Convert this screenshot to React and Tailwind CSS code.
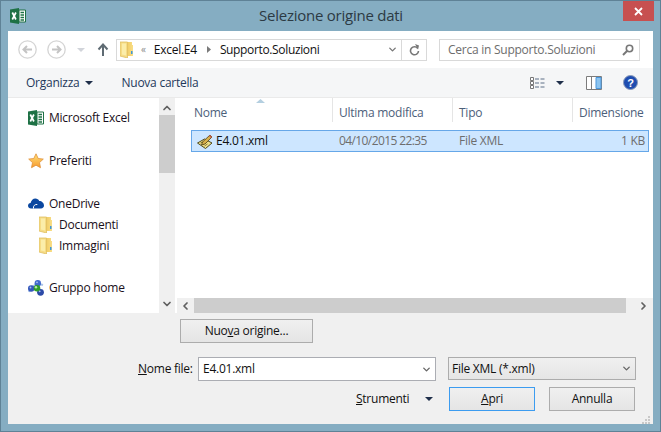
import { ChevronDown, ChevronUp, ChevronLeft, ChevronRight } from 'lucide-react'

const Caret = ({ className = '' }) => (
  <svg width="8" height="4" viewBox="0 0 8 4" className={className}>
    <path d="M0 0h8L4 4z" fill="#1f2f4a" />
  </svg>
)

const ExcelIcon = ({ className = '' }) => (
  <svg width="16" height="16" viewBox="0 0 16 16" className={className}>
    <path d="M0 1.5L9 0v16L0 14.5z" fill="#1e7145" />
    <path d="M9 2h6.5v12H9z" fill="#fff" stroke="#1e7145" />
    <path d="M10.5 4.5h3.5M10.5 7h3.5M10.5 9.5h3.5M10.5 12h3.5" stroke="#1e7145" strokeWidth="1.4" />
    <path d="M2.3 4.5l3.6 7M5.9 4.5l-3.6 7" stroke="#fff" strokeWidth="1.7" />
  </svg>
)

const FolderIcon = ({ className = '', id }) => (
  <svg width="13" height="17" viewBox="0 0 13 17" className={className}>
    <defs>
      <linearGradient id={id} x1="0" y1="0" x2="1" y2="0">
        <stop offset="0" stopColor="#f0c85c" />
        <stop offset="1" stopColor="#f8de88" />
      </linearGradient>
    </defs>
    <path d="M6 1h6v3h1v11H6z" fill={`url(#${id})`} />
    <path d="M0 1h7.500v16L0 15z" fill="#f6dc86" />
    <path d="M0 1h7.500v16L0 15z" fill="none" stroke="#e0bf62" strokeWidth=".8" />
    <path d="M2 2.500h4v12l-4-1z" fill="#fbeda9" />
    <path d="M11 10h1.500v3H11z" fill="#3f97d8" />
  </svg>
)

const StarIcon = () => (
  <svg width="16" height="16" viewBox="0 0 16 16">
    <defs>
      <linearGradient id="star" x1="0" y1="0" x2="0" y2="1">
        <stop offset="0" stopColor="#ffe27a" />
        <stop offset="1" stopColor="#f79a2e" />
      </linearGradient>
    </defs>
    <path d="M8 .8l2.2 4.700 5.100.6-3.800 3.500 1 5.100L8 12.200l-4.500 2.500 1-5.100L.7 6.100l5.100-.6z" fill="url(#star)" stroke="#e0903a" strokeWidth=".8" />
  </svg>
)

const CloudIcon = () => (
  <svg width="16" height="11" viewBox="0 0 16 11">
    <path d="M3 10.500C1.300 10.500 0 9.400 0 7.800c0-1.500 1.100-2.600 2.600-2.700C3.200 2.400 5 .6 7.400.6c1.700 0 3.100.9 3.800 2.300C13.900 2.900 16 5 16 7.600c0 1.700-1.200 2.900-3 2.900z" fill="#0a47a0" />
    <path d="M5.500 10.500c-.6-2.500 1.500-4.500 3.800-4" stroke="#fff" strokeWidth="1" fill="none" />
  </svg>
)

const HomeGroupIcon = () => (
  <svg width="16" height="16" viewBox="0 0 16 16">
    <path d="M1 12C3 6 9 3 15 5" fill="none" stroke="#a9c4e8" strokeWidth="2" />
    <circle cx="3.200" cy="8.500" r="3.200" fill="#3558bb" />
    <circle cx="9.800" cy="3.200" r="3.200" fill="#4169cc" />
    <circle cx="12.500" cy="12.300" r="3.400" fill="#2c4aa8" />
    <circle cx="9" cy="8.200" r="3.300" fill="#2f9e2a" />
    <circle cx="8" cy="7.200" r="1.200" fill="#b8eaa8" />
    <circle cx="2.500" cy="7.500" r=".9" fill="#a8c0f0" />
    <circle cx="9" cy="2.300" r=".9" fill="#a8c0f0" />
    <circle cx="11.700" cy="11.300" r=".9" fill="#a8c0f0" />
  </svg>
)

const XmlIcon = () => (
  <svg width="16" height="15" viewBox="0 0 16 15">
    <path d="M0.500 9l7-4 7.500 4-6.500 5.500z" fill="#efe08a" stroke="#4e4a1e" />
    <path d="M3.500 9l4-2M5.500 10.500l4-2M7.500 12l3-2" stroke="#8a7f30" />
    <path d="M5.500 8l7.500-7 2 2-7 7-3.500 1z" fill="#d8b04a" stroke="#4e3f18" strokeWidth=".8" />
    <path d="M12.500 1.500l2 2" stroke="#c85a4a" strokeWidth="1.500" />
  </svg>
)

const ArrowCircle = ({ flip }) => (
  <svg width="19" height="19" viewBox="0 0 19 19" className={flip ? 'rotate-180' : ''}>
    <circle cx="9.500" cy="9.500" r="8.700" fill="#fff" stroke="#d4d4d4" strokeWidth="1.300" />
    <path d="M14 9.500H6M9 6L5.500 9.500 9 13" fill="none" stroke="#c4c4c4" strokeWidth="2" />
  </svg>
)

const SideItem = ({ icon, label, sub }) => (
  <div className={sub ? 'flex h-[21px] items-center pl-[31px]' : 'flex h-[21px] items-center pl-[20px]'}>
    <span className={sub ? 'flex w-[20px] justify-start' : 'flex w-[21px] justify-start'}>{icon}</span>
    <span className="text-[12px] text-[#1a1020]">{label}</span>
  </div>
)

const Column = ({ label, className }) => (
  <div className={`flex h-[24px] items-center border-r border-[#e5e5e5] pt-[5px] text-[12px] text-[#4c607a] ${className}`}>
    {label}
  </div>
)

const Btn = ({ children, className = '' }) => (
  <button className={`flex h-[24px] items-center justify-center border bg-gradient-to-b from-[#f0f0f0] to-[#e5e5e5] text-[12px] text-[#111] ${className}`}>
    {children}
  </button>
)

export default function App() {
  return (
    <div className="flex h-[432px] w-[661px] flex-col border border-[#5f8296] bg-[#85adc2] font-['Open_Sans','Liberation_Sans',sans-serif] tracking-[-0.25px]">
      <div className="relative flex h-[30px] shrink-0 items-center pl-[9px]">
        <ExcelIcon className="-mt-[1px]" />
        <div className="-mt-[2px] flex-1 pr-[24px] text-center text-[15px] text-[#2c3a44]">Selezione origine dati</div>
        <div className="absolute right-[6px] top-0 flex h-[20px] w-[31px] items-center justify-center bg-[#c75050]">
          <svg width="9" height="9" viewBox="0 0 9 9">
            <path d="M1 1l7 7M8 1l-7 7" stroke="#fff" strokeWidth="1.800" />
          </svg>
        </div>
      </div>

      <div className="mx-[7px] flex h-[393px] w-[645px] flex-col bg-white">
        <div className="flex h-[37px] shrink-0 items-center">
          <div className="ml-[10px] flex w-[98px] items-center">
            <ArrowCircle />
            <span className="ml-[10px]"><ArrowCircle flip /></span>
            <Caret className="ml-[11px] opacity-20" />
            <svg width="12" height="13" viewBox="0 0 12 13" className="ml-[12px]">
              <path d="M6 13V2M1.500 6.500L6 1.500l4.500 5" fill="none" stroke="#5f6b73" strokeWidth="2" />
            </svg>
          </div>
          <div className="flex h-[22px] w-[311px] items-center border border-[#d9d9d9] text-[12px] text-[#111]">
            <FolderIcon id="folder-nav" className="ml-[3px]" />
            <span className="ml-[8px] text-[10px] text-[#8a8a8a]">«</span>
            <span className="ml-[8px]">Excel.E4</span>
            <svg width="4" height="7" viewBox="0 0 4 7" className="ml-[10px]"><path d="M0 0l4 3.500L0 7z" fill="#7a7a7a" /></svg>
            <span className="ml-[9px] w-[164px] tracking-[-0.35px]">Supporto.Soluzioni</span>
            <ChevronDown size={11} strokeWidth={3} color="#777" className="ml-auto mr-[3px]" />
            <div className="flex h-full w-[25px] items-center justify-center border-l border-[#d9d9d9]">
              <svg width="11" height="12" viewBox="0 0 11 12">
                <path d="M8.800 4.500A4 4 0 1 0 9.500 7" fill="none" stroke="#777" strokeWidth="1.600" />
                <path d="M6 0l4 1.500-1 4z" fill="#777" />
              </svg>
            </div>
          </div>
          <div className="ml-[12px] flex h-[22px] w-[201px] items-center border border-[#d9d9d9] pl-[8px] pr-[5px] text-[12px] text-[#6d6d6d]">
            Cerca in Supporto.Soluzioni
            <svg width="12" height="12" viewBox="0 0 12 12" className="ml-auto">
              <circle cx="7.500" cy="4.500" r="3.200" fill="none" stroke="#777" strokeWidth="1.600" />
              <path d="M5 7l-4 4" stroke="#777" strokeWidth="2" />
            </svg>
          </div>
        </div>

        <div className="flex h-[30px] shrink-0 items-center border-b border-[#eaeaea] bg-[#f5f6f7] text-[12px] text-[#1e395b]">
          <span className="ml-[18px]">Organizza</span>
          <Caret className="ml-[6px]" />
          <span className="ml-[28px]">Nuova cartella</span>
          <div className="ml-auto flex items-center">
            <svg width="15" height="12" viewBox="0 0 15 12">
              <path d="M.5.500h3v3h-3zM.5 4.500h3v3h-3zM.5 8.500h3v3h-3z" fill="#fff" stroke="#777" />
              <path d="M5 2h4M10.500 2h4M5 6h4M10.500 6h4M5 10h4M10.500 10h4" stroke="#5c6e86" />
            </svg>
            <Caret className="ml-[11px]" />
            <svg width="16" height="14" viewBox="0 0 16 14" className="ml-[22px]">
              <path d="M.5.500h15v13H.5z" fill="#fff" stroke="#7c7c7c" />
              <path d="M5.500 1v12" stroke="#7c7c7c" />
              <path d="M10 1.500h5v11h-5z" fill="#8cc4f0" stroke="#4a97dd" />
            </svg>
            <svg width="15" height="15" viewBox="0 0 15 15" className="ml-[21px] mr-[15px]">
              <circle cx="7.500" cy="7.500" r="7" fill="#1f4db0" stroke="#8a9ab8" />
              <text x="7.500" y="11.500" textAnchor="middle" fontSize="11" fontWeight="700" fill="#fff" fontFamily="Liberation Sans">?</text>
            </svg>
          </div>
        </div>

        <div className="flex h-[215px] shrink-0">
          <div className="flex w-[151px] flex-col pt-[9px]">
            <SideItem icon={<ExcelIcon />} label="Microsoft Excel" />
            <div className="h-[22px]" />
            <SideItem icon={<StarIcon />} label="Preferiti" />
            <div className="h-[22px]" />
            <SideItem icon={<CloudIcon />} label="OneDrive" />
            <SideItem sub icon={<FolderIcon id="folder-doc" />} label="Documenti" />
            <SideItem sub icon={<FolderIcon id="folder-img" />} label="Immagini" />
            <div className="h-[21px]" />
            <SideItem icon={<HomeGroupIcon />} label="Gruppo home" />
          </div>
          <div className="flex w-[16px] flex-col items-center bg-[#f0f0f0]">
            <ChevronUp size={12} strokeWidth={3.500} color="#606060" className="mt-[3px] h-[14px]" />
            <div className="h-[58px] w-full bg-[#cdcdcd]" />
            <ChevronDown size={12} strokeWidth={3.500} color="#606060" className="mb-[2px] mt-auto h-[14px]" />
          </div>
          <div className="flex min-w-0 flex-1 flex-col pl-[1px]">
            <div className="relative flex h-[32px]">
              <svg width="9" height="4" viewBox="0 0 9 4" className="absolute left-[80px] top-[1px]">
                <path d="M4.500 0L9 4H0z" fill="#b4cfe0" />
              </svg>
              <Column label="Nome" className="w-[157px] pl-[18px]" />
              <Column label="Ultima modifica" className="w-[120px] pl-[6px]" />
              <Column label="Tipo" className="w-[120px] pl-[6px]" />
              <Column label="Dimensione" className="w-[79px] border-r-0 pl-[6px]" />
            </div>
            <div className="ml-[15px] flex h-[22px] w-[458px] items-center border border-[#66a7e8] bg-[#cde6ff] text-[12px] text-[#6d6d6d]">
              <span className="ml-[5px] w-[19px]"><XmlIcon /></span>
              <span className="w-[123px] text-[#111]">E4.01.xml</span>
              <span className="w-[120px] tracking-[-0.6px]">04/10/2015 22:35</span>
              <span className="w-[120px]">File XML</span>
              <span className="w-[66px] text-right">1 KB</span>
            </div>
            <div className="ml-[1px] mt-auto flex h-[15px] items-center bg-[#f0f0f0]">
              <ChevronLeft size={12} strokeWidth={3.500} color="#606060" className="w-[17px]" />
              <div className="h-full w-[432px] bg-[#cdcdcd]" />
              <ChevronRight size={12} strokeWidth={3.500} color="#606060" className="ml-auto mr-[1px] w-[17px]" />
            </div>
          </div>
        </div>

        <div className="flex flex-1 flex-col bg-[#f0f0f0] text-[12px] text-[#111]">
          <Btn className="ml-[172px] mt-[6px] w-[133px] border-[#acacac]">
            <span>Nuo<u>v</u>a origine...</span>
          </Btn>
          <div className="mt-[14px] flex h-[24px] items-center">
            <span className="ml-[130px] w-[60px]"><u>N</u>ome file:</span>
            <div className="flex h-[24px] w-[238px] items-center border border-[#abadb3] bg-white pl-[4px]">
              E4.01.xml
              <ChevronDown size={11} strokeWidth={3} color="#666" className="ml-auto mr-[3px]" />
            </div>
            <div className="ml-[12px] flex h-[23px] w-[188px] items-center self-start border border-[#acacac] bg-gradient-to-b from-[#f0f0f0] to-[#e5e5e5] pl-[3px]">
              File XML (*.xml)
              <ChevronDown size={11} strokeWidth={3} color="#666" className="ml-auto mr-[3px]" />
            </div>
          </div>
          <div className="mt-[6px] flex h-[24px] items-center">
            <span className="ml-[348px] w-[69px]"><u>S</u>trumenti</span>
            <Caret />
            <Btn className="ml-[16px] w-[86px] border-[#3c9cf0]">
              <span><u>A</u>pri</span>
            </Btn>
            <Btn className="ml-[14px] w-[86px] border-[#acacac]">Annulla</Btn>
          </div>
          <svg width="8" height="8" viewBox="0 0 8 8" className="ml-[634px] mt-[5px]">
            <path d="M6 0h2v2H6zM3 3h2v2H3zM6 3h2v2H6zM0 6h2v2H0zM3 6h2v2H3zM6 6h2v2H6z" fill="#c8c8c8" />
          </svg>
        </div>
      </div>
    </div>
  )
}
